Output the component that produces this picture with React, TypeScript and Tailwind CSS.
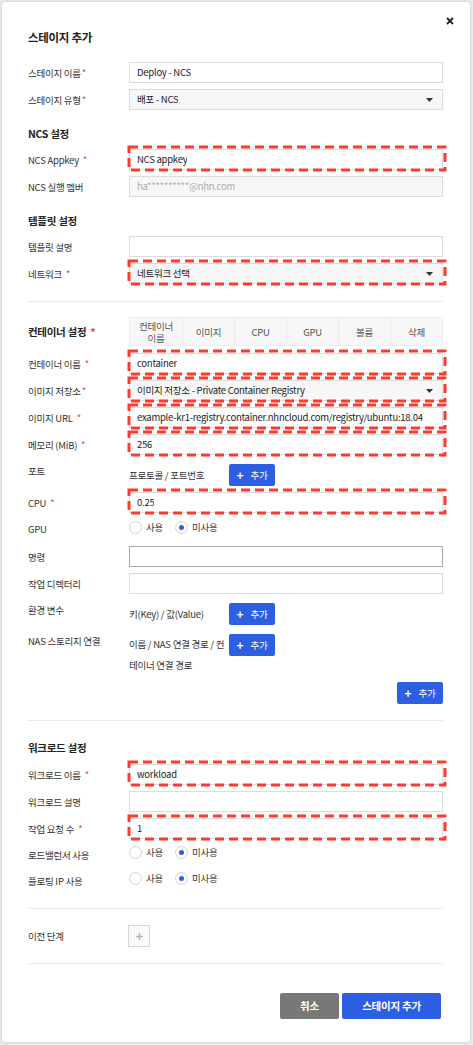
import React from "react";

const BLUE = "bg-[#2d5fe3]";

function Star({ space }: { space?: boolean }) {
  return <span className={`text-[#e8413a] ${space ? "ml-[4px]" : "ml-[1px]"}`}>*</span>;
}

function Label({ text, req, space, className = "" }: { text: string; req?: boolean; space?: boolean; className?: string }) {
  return (
    <div className={`w-[101px] shrink-0 text-[9.5px] leading-[14px] text-[#333] ${className}`}>
      {text}
      {req && <Star space={space} />}
    </div>
  );
}

// red dashed annotation box drawn over a field
function Marked({ children }: { children: React.ReactNode }) {
  return (
    <div className="relative min-w-0 flex-1">
      {children}
      <svg className="pointer-events-none absolute -left-[0px] -top-[2px] h-[calc(100%+2px)] w-[calc(100%+2px)] overflow-visible">
        <rect x="0" y="0" width="100%" height="100%" fill="none" stroke="#fe3a2e" strokeWidth="3" strokeDasharray="9 5" />
      </svg>
    </div>
  );
}

function Field({ value, muted, gray, dark }: { value?: string; muted?: boolean; gray?: boolean; dark?: boolean }) {
  return (
    <div
      className={`flex h-[21px] w-full min-w-0 items-center overflow-hidden border px-[7px] text-[9.5px] ${
        dark ? "border-[#a9a9a9]" : "border-[#dcdcdc]"
      } ${gray ? "bg-[#f7f7f7]" : "bg-white"} ${muted ? "text-[#aaa]" : "text-[#222]"}`}
    >
      <span className="truncate whitespace-nowrap">{value}</span>
    </div>
  );
}

function Select({ value }: { value: string }) {
  return (
    <div className="flex h-[21px] w-full items-center justify-between border border-[#dcdcdc] bg-[#f7f7f7] pl-[7px] pr-[9px] text-[9.5px] text-[#222]">
      <span className="truncate">{value}</span>
      <svg width="7" height="4" viewBox="0 0 7 4" className="shrink-0">
        <path d="M0 0h7L3.5 4z" fill="#333" />
      </svg>
    </div>
  );
}

function Row({ label, req, space, children, className = "" }: { label: string; req?: boolean; space?: boolean; children: React.ReactNode; className?: string }) {
  return (
    <div className={`flex items-center ${className}`}>
      <Label text={label} req={req} space={space} />
      {children}
    </div>
  );
}

function AddButton() {
  return (
    <button className={`flex h-[22px] w-[46px] shrink-0 items-center justify-center gap-[7px] rounded-[2px] ${BLUE} text-[9.5px] text-white`}>
      <span className="text-[12px] font-bold leading-none">+</span>
      <span>추가</span>
    </button>
  );
}

function Radio({ checked }: { checked?: boolean }) {
  return (
    <span className="flex h-[13px] w-[13px] items-center justify-center rounded-full border border-[#d4d4d4] bg-white">
      {checked && <span className="h-[5px] w-[5px] rounded-full bg-[#2d5fe3]" />}
    </span>
  );
}

function RadioPair() {
  return (
    <div className="flex items-center text-[9.5px] text-[#333]">
      <Radio />
      <span className="ml-[4px]">사용</span>
      <span className="ml-[12px]" />
      <Radio checked />
      <span className="ml-[4px]">미사용</span>
    </div>
  );
}

function Heading({ children, className = "" }: { children: React.ReactNode; className?: string }) {
  return <div className={`h-[16px] text-[10.5px] font-semibold leading-[16px] tracking-[-0.3px] text-[#222] ${className}`}>{children}</div>;
}

export default function App() {
  const cols = ["컨테이너\n이름", "이미지", "CPU", "GPU", "볼륨", "삭제"];

  return (
    <div className="min-h-screen w-full bg-[#ececec] p-[2px] font-['Noto_Sans_CJK_KR','Noto_Sans',sans-serif] tracking-[-0.25px]">
      <div className="relative h-[1040px] w-[468px] rounded-[3px] bg-white pl-[26px] pr-[27px] pt-[26px] shadow-[0_0_3px_rgba(0,0,0,0.18)]">
        {/* close */}
        <button className="absolute right-[16px] top-[15px]">
          <svg width="8" height="8" viewBox="0 0 8 8">
            <path d="M1 1l6 6M7 1L1 7" stroke="#222" strokeWidth="1.8" />
          </svg>
        </button>

        <h2 className="h-[18px] text-[11.5px] font-bold leading-[18px] tracking-[-0.3px] text-[#222]">스테이지 추가</h2>

        <div className="mt-[16px] flex flex-col gap-[6px]">
          <Row label="스테이지 이름" req>
            <Field value="Deploy - NCS" />
          </Row>
          <Row label="스테이지 유형" req>
            <Select value="배포 - NCS" />
          </Row>
        </div>

        {/* NCS */}
        <Heading className="mt-[16px]">NCS 설정</Heading>
        <div className="mt-[7px] flex flex-col gap-[6px]">
          <Row label="NCS Appkey" req space>
            <Marked>
              <Field value="NCS appkey" />
            </Marked>
          </Row>
          <Row label="NCS 실행 멤버">
            <Field value="ha**********@nhn.com" muted gray />
          </Row>
        </div>

        {/* Template */}
        <Heading className="mt-[16px]">템플릿 설정</Heading>
        <div className="mt-[7px] flex flex-col gap-[6px]">
          <Row label="템플릿 설명">
            <Field />
          </Row>
          <Row label="네트워크" req space>
            <Marked>
              <Select value="네트워크 선택" />
            </Marked>
          </Row>
        </div>

        <div className="mt-[17px] border-t border-[#ebebeb]" />

        {/* Container */}
        <div className="mt-[15px] flex items-center">
          <div className="w-[101px] shrink-0 text-[10.5px] font-semibold tracking-[-0.3px] text-[#222]">
            컨테이너 설정<span className="ml-[4px] text-[#e8413a]">*</span>
          </div>
          <div className="grid h-[29px] flex-1 grid-cols-6 border border-[#ececec] bg-[#f7f7f7]">
            {cols.map((c, i) => (
              <div
                key={c}
                className={`flex items-center justify-center whitespace-pre-line text-center text-[9.5px] leading-[12px] text-[#555] ${
                  i > 0 ? "border-l border-[#ececec]" : ""
                }`}
              >
                {c}
              </div>
            ))}
          </div>
        </div>

        <div className="mt-[7px] flex flex-col gap-[6px]">
          <Row label="컨테이너 이름" req space>
            <Marked>
              <Field value="container" />
            </Marked>
          </Row>
          <Row label="이미지 저장소" req>
            <Marked>
              <Select value="이미지 저장소 - Private Container Registry" />
            </Marked>
          </Row>
          <Row label="이미지 URL" req space>
            <Marked>
              <Field value="example-kr1-registry.container.nhncloud.com/registry/ubuntu:18.04" />
            </Marked>
          </Row>
          <Row label="메모리 (MiB)" req space>
            <Marked>
              <Field value="256" />
            </Marked>
          </Row>
        </div>

        <div className="mt-[9px] flex items-start">
          <Label text="포트" />
          <div className="w-[100px] shrink-0 pt-[4px] text-[9.5px] leading-[14px] text-[#333]">프로토콜 / 포트번호</div>
          <AddButton />
        </div>

        <Row label="CPU" req space className="mt-[6px]">
          <Marked>
            <Field value="0.25" />
          </Marked>
        </Row>

        <div className="mt-[6px] flex h-[16px] items-center">
          <Label text="GPU" className="pt-[4px]" />
          <RadioPair />
        </div>

        <div className="mt-[11px] flex flex-col gap-[6px]">
          <Row label="명령">
            <Field dark />
          </Row>
          <Row label="작업 디렉터리">
            <Field />
          </Row>
        </div>

        <div className="mt-[9px] flex items-start">
          <Label text="환경 변수" />
          <div className="w-[100px] shrink-0 pt-[4px] text-[9.5px] leading-[14px] text-[#333]">키(Key) / 값(Value)</div>
          <AddButton />
        </div>

        <div className="mt-[9px] flex items-start">
          <Label text="NAS 스토리지 연결" />
          <div className="w-[100px] shrink-0 whitespace-nowrap text-[9.5px] leading-[21px] text-[#333]">
            이름 / NAS 연결 경로 / 컨
            <br />
            테이너 연결 경로
          </div>
          <AddButton />
        </div>

        <div className="mt-[6px] flex justify-end">
          <AddButton />
        </div>

        <div className="mt-[16px] border-t border-[#ebebeb]" />

        {/* Workload */}
        <Heading className="mt-[19px]">워크로드 설정</Heading>
        <div className="mt-[8px] flex flex-col gap-[6px]">
          <Row label="워크로드 이름" req space>
            <Marked>
              <Field value="workload" />
            </Marked>
          </Row>
          <Row label="워크로드 설명">
            <Field />
          </Row>
          <Row label="작업 요청 수" req space>
            <Marked>
              <Field value="1" />
            </Marked>
          </Row>
        </div>

        <div className="mt-[5px] flex h-[16px] items-center">
          <Label text="로드밸런서 사용" className="pt-[5px]" />
          <RadioPair />
        </div>
        <div className="mt-[10px] flex h-[16px] items-center">
          <Label text="플로팅 IP 사용" className="pt-[5px]" />
          <RadioPair />
        </div>

        <div className="mt-[22px] border-t border-[#ebebeb]" />

        <div className="mt-[16px] flex items-center">
          <Label text="이전 단계" />
          <div className="-ml-[1px] flex h-[22px] w-[22px] items-center justify-center border border-[#d6d6d6] bg-[#f9f9f9]">
            <svg width="7" height="7" viewBox="0 0 7 7">
              <path d="M3.5 0v7M0 3.5h7" stroke="#b5b5b5" strokeWidth="1.6" />
            </svg>
          </div>
        </div>

        <div className="mt-[16px] border-t border-[#ebebeb]" />

        <div className="mt-[29px] flex justify-end gap-[3px] pr-[2px]">
          <button className="h-[26px] w-[59px] rounded-[2px] bg-[#787878] text-[10.5px] font-semibold text-white">취소</button>
          <button className={`h-[26px] w-[99px] rounded-[2px] ${BLUE} text-[10.5px] font-semibold text-white`}>스테이지 추가</button>
        </div>
      </div>
    </div>
  );
}
